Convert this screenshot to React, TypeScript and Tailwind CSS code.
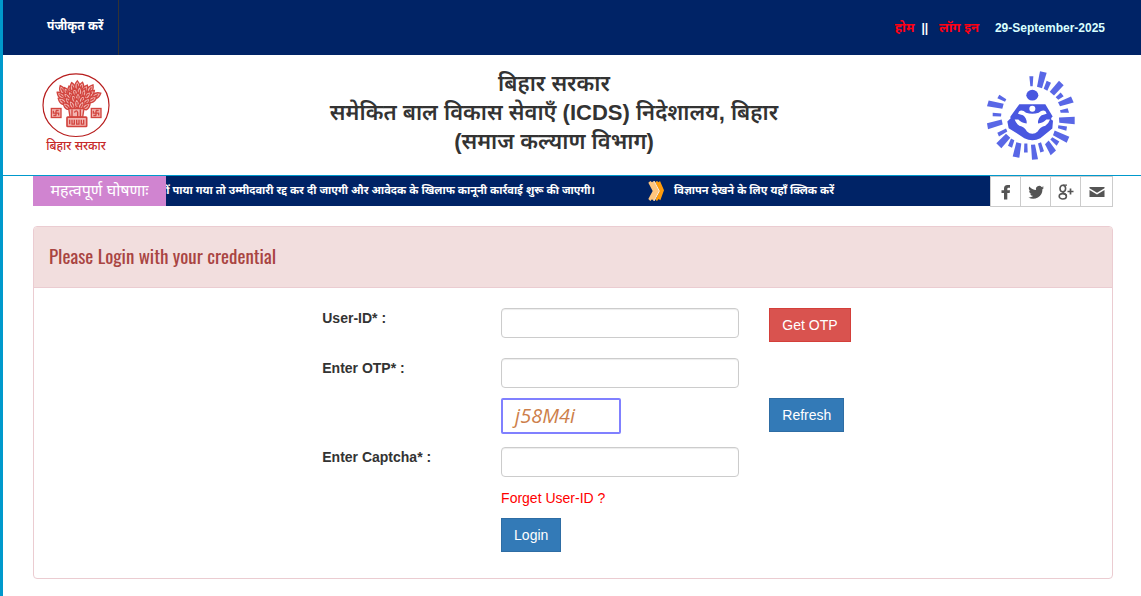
import { ReactNode } from 'react';

interface FieldProps {
  id: string;
  label: string;
  type?: string;
  action?: ReactNode;
}

const RAYS = [
  '178,48 190,48 188,78 181,78',
  '210,33 230,38 216,84 201,80',
  '230,62 243,68 232,92 221,86',
  '267,62 281,75 252,106 239,95',
  '272,97 281,108 265,119 257,111',
  '303,109 311,127 270,138 264,126',
  '293,144 297,158 272,158 270,150',
  '314,170 314,192 268,188 267,172',
  '291,199 289,212 264,204 265,195',
  '298,230 290,248 249,225 254,211',
  '268,244 260,257 241,238 247,231',
  '258,271 242,285 225,252 236,241',
  '222,273 211,277 204,250 213,246',
  '204,297 186,299 183,254 195,253',
  '173,277 162,277 163,250 172,250',
  '148,293 128,289 139,246 154,250',
  '126,263 114,257 123,235 133,240',
  '94,264 79,249 108,221 121,233',
  '87,229 82,218 108,205 112,214',
  '54,207 51,189 95,178 98,193',
  '68,168 68,158 94,160 93,169',
  '51,138 56,121 101,131 97,146',
  '82,114 88,104 109,117 105,125',
];

// [x, y, angle] of each leaf in the tree crown
const LEAVES = [
  [58, 62, -50], [62, 46, -25], [75, 52, -25], [86, 48, -15], [93, 38, -12],
  [107, 33, 0], [119, 37, 14], [130, 44, 28], [146, 43, 32], [147, 57, 48],
  [164, 62, 62], [152, 74, 60], [137, 62, 40], [125, 56, 18], [113, 50, 4],
  [100, 54, -12], [88, 62, -28], [76, 66, -38], [62, 79, -55], [80, 79, -40],
  [97, 72, -18], [109, 68, 0], [121, 75, 20], [134, 81, 45], [76, 94, -50],
  [91, 90, -28], [106, 87, -6], [119, 92, 25], [134, 95, 50],
];

function BiharEmblem() {
  return (
    <svg viewBox="0 0 204 194" className="w-[68px] h-[65px]" fill="none" stroke="#b71c1c" aria-hidden="true">
      <ellipse cx="102" cy="96" rx="99" ry="94" strokeWidth="3.5" />
      <g stroke="#d2453f" strokeWidth="4" fill="#f2b5b1">
        {LEAVES.map(([x, y, angle]) => (
          <path
            key={`${x}-${y}`}
            d="M0 -15 Q10 -4 7 7 Q0 15 -7 7 Q-10 -4 0 -15Z M0 -6 V7"
            transform={`translate(${x - 1} ${y + 5}) rotate(${angle})`}
          />
        ))}
        <path d="M80 106 H126 L122 132 H84 Z M90 109 V130 M97 118 Q104 108 107 118 V130 M115 109 V130" />
        <rect x="75" y="132" width="59" height="28" rx="2" strokeWidth="5" />
        <path d="M83 140 V153 M90 140 V153 H97 V140 M104 140 V153 H111 V140 M118 140 V153 H125 V140" />
        <rect x="28" y="106" width="29" height="27" />
        <path d="M34 113 V120 H50 V127 M42 112 V128 M42 112 H50 M34 127 H42" />
        <rect x="148" y="106" width="29" height="27" />
        <path d="M154 113 V120 H170 V127 M162 112 V128 M162 112 H170 M154 127 H162" />
      </g>
    </svg>
  );
}

function IcdsLogo() {
  return (
    <svg viewBox="48 30 270 272" className="w-[90px] h-[91px]" aria-label="ICDS">
      <g fill="#5967e6">
        {RAYS.map((points) => (
          <polygon key={points} points={points} />
        ))}
      </g>
      <g fill="#4957e0">
        <ellipse cx="187" cy="105" rx="18" ry="16" />
        <path d="M148 132 H226 L248 169 Q243 172 243 177 L249 182 L247 205 L211 234 Q187 246 163 234 L116 204 L112 184 L122 174 Q120 171 122 168 Z" />
      </g>
      <g fill="#fff">
        <circle cx="187" cy="146" r="9" />
        <path d="M147 154 Q156 147 168 158 Q187 164 206 158 Q218 147 227 154 L230 161 Q223 164 215 165 Q203 174 204 190 Q220 189 229 178 L240 178 Q236 190 226 197 Q210 201 203 214 Q196 221 187 221 Q178 221 171 214 Q164 201 148 197 Q138 190 134 178 L145 178 Q154 189 170 190 Q171 174 159 165 Q151 164 144 161 Z" />
      </g>
    </svg>
  );
}

function ChevronMark() {
  return (
    <svg viewBox="0 0 48 60" className="w-4 h-5 shrink-0" aria-hidden="true">
      <path d="M21 4 L27 0 L32 4 L36 0 L48 28 L37 58 L32 54 L27 60 L22 56 L34 30 Z" fill="#ff9c0c" />
      <path d="M1 5 L7 0 L12 4 L18 0 L34 30 L18 60 L12 55 L7 60 L1 54 L14 30 Z" fill="#ffc57d" />
      <path d="M18 0 L34 30 L18 60" fill="none" stroke="#fff0dc" strokeWidth="3" />
    </svg>
  );
}

const SOCIAL = [
  {
    name: 'Facebook',
    icon: <path fill="#555" d="M6 15.5 V9 H3.5 V6.3 H6 V4.5 Q6 1 9.4 1 H12 V3.8 H10.3 Q9.3 3.8 9.3 5 V6.3 H12 L11.7 9 H9.3 V15.5 Z" />,
  },
  {
    name: 'Twitter',
    icon: (
      <path
        fill="#555"
        d="M16 3.5 a6 6 0 0 1-1.7.5 3 3 0 0 0 1.3-1.8 6 6 0 0 1-2 .8 3.2 3.2 0 0 0-5.5 3 9 9 0 0 1-6.7-3.5 3.3 3.3 0 0 0 1 4.4 3 3 0 0 1-1.4-.4 3.3 3.3 0 0 0 2.6 3.2 3 3 0 0 1-1.5.1 3.3 3.3 0 0 0 3 2.3 6.5 6.5 0 0 1-4.7 1.3 9.2 9.2 0 0 0 14-8.2 6 6 0 0 0 1.6-1.7z"
      />
    ),
  },
  {
    name: 'Google Plus',
    icon: (
      <g fill="none" stroke="#555">
        <ellipse cx="4.8" cy="4.5" rx="2.8" ry="3.3" strokeWidth="1.6" />
        <path d="M5 1.1 H9 M6.5 7.2 Q4 8.3 5.5 9.2" strokeWidth="1.4" />
        <ellipse cx="4.8" cy="12.3" rx="3.6" ry="2.7" strokeWidth="1.6" />
        <path d="M5.2 9 Q7.6 10 8.4 11.6" strokeWidth="1.8" />
        <path d="M12.5 4.5 V10.5 M9.5 7.5 H15.5" strokeWidth="1.7" />
      </g>
    ),
  },
  {
    name: 'Email',
    icon: <path fill="#555" d="M.5 3 H15.5 V4.2 L8 8.8 L.5 4.2 Z M.5 6 L8 10.4 L15.5 6 V13 H.5 Z" />,
  },
];

function Field({ id, label, type = 'text', action }: FieldProps) {
  return (
    <div className="grid grid-cols-12">
      <label htmlFor={id} className="col-start-4 col-span-2 px-[15px] font-bold leading-5 text-[#333]">
        {label}
      </label>
      <div className="col-span-3 px-[15px]">
        <input
          id={id}
          type={type}
          className="block w-full h-[30px] px-2 bg-white border border-[#ccc] rounded-[4px] shadow-[inset_0_1px_1px_rgba(0,0,0,0.075)]"
        />
      </div>
      {action && <div className="col-span-3 px-[15px]">{action}</div>}
    </div>
  );
}

export default function App() {
  return (
    <div
      lang="hi"
      className="min-h-screen border-l-[3px] border-[#0099cc] bg-white text-sm text-[#333] font-['Liberation_Sans','Noto_Sans',sans-serif]"
    >
      <nav className="flex h-[55px] justify-between bg-[#002366] text-xs font-bold text-white">
        <a
          href="#register"
          className="flex w-[116px] items-center border-r border-[#333] pl-[44px] pb-1 whitespace-nowrap"
        >
          पंजीकृत करें
        </a>
        <div className="flex items-center pr-9">
          <a href="#home" className="text-[13px] text-[#ff0012]">होम</a>
          <span className="px-[7px]">||</span>
          <a href="#login" className="ml-1 mr-4 text-[13px] text-[#ff0012]">लॉग इन</a>
          <span className="text-[#d9ffff]">29-September-2025</span>
        </div>
      </nav>

      <header className="flex h-[121px] items-start justify-between border-b border-[#0099cc] pl-[39px] pr-[65px]">
        <div className="flex flex-col items-center pt-[18px] text-xs font-medium text-[#c62828]">
          <BiharEmblem />
          <span className="leading-4">बिहार सरकार</span>
        </div>
        <h1 className="pt-[14px] pl-3 text-center text-[22px] leading-[29px] font-semibold">
          बिहार सरकार
          <br />
          समेकित बाल विकास सेवाएँ (ICDS) निदेशालय, बिहार
          <br />
          (समाज कल्याण विभाग)
        </h1>
        <div className="pt-[15px]">
          <IcdsLogo />
        </div>
      </header>

      <main className="pl-[30px] pr-7">
        <div className="flex h-[30px]">
          <h2 className="flex w-[133px] shrink-0 items-center justify-center bg-[#d084d0] text-base text-white whitespace-nowrap">
            महत्वपूर्ण घोषणाः
          </h2>
          <div className="flex min-w-0 flex-1 items-center justify-end overflow-hidden bg-[#002366] pr-[156px] text-[11px] font-bold whitespace-nowrap text-white">
            <span className="mr-[53px] shrink-0">
              नहीं पाया गया तो उम्मीदवारी रद्द कर दी जाएगी और आवेदक के खिलाफ कानूनी कार्रवाई शुरू की जाएगी।
            </span>
            <ChevronMark />
            <a href="#advertisement" className="ml-[10px] shrink-0">
              विज्ञापन देखने के लिए यहाँ क्लिक करें
            </a>
          </div>
          <div className="flex h-[31px] w-[123px] shrink-0 border border-[#ccc]">
            {SOCIAL.map(({ name, icon }) => (
              <a
                key={name}
                href="#social"
                aria-label={name}
                className="flex w-[30px] items-center justify-center border-r border-[#ccc] last:w-[31px] last:border-r-0"
              >
                <svg viewBox="0 0 16 16" className="h-4 w-4">
                  {icon}
                </svg>
              </a>
            ))}
          </div>
        </div>

        <section className="mt-5 rounded-[4px] border border-[#ebccd1] bg-white">
          <div className="h-[61px] rounded-t-[3px] border-b border-[#ebccd1] bg-[#f2dede] px-[15px] pt-3">
            <h2 className="text-[19px] leading-8 font-normal text-[#a94442] font-['Oswald','Liberation_Sans_Narrow','Roboto_Condensed',sans-serif]">
              Please Login with your credential
            </h2>
          </div>
          <form className="pt-5 pb-[26px] pl-[5px]" onSubmit={(e) => e.preventDefault()}>
            <Field
              id="user-id"
              label="User-ID* :"
              action={
                <button type="button" className="h-[34px] border border-[#d43f3a] bg-[#d9534f] px-3 text-white">
                  Get OTP
                </button>
              }
            />
            <div className="mt-4">
              <Field id="otp" label="Enter OTP* :" />
            </div>
            <div className="mt-[10px] grid grid-cols-12">
              <div className="col-start-6 col-span-3 px-[15px]">
                <div className="flex h-9 w-[120px] items-center rounded-[2px] border-2 border-[#8080ff] pl-3 text-xl text-[#cd7f4b] italic font-['Open_Sans',sans-serif]">
                  j58M4i
                </div>
              </div>
              <div className="col-span-3 px-[15px]">
                <button type="button" className="h-[34px] border border-[#2e6da4] bg-[#337ab7] px-3 text-white">
                  Refresh
                </button>
              </div>
            </div>
            <div className="mt-[13px]">
              <Field id="captcha" label="Enter Captcha* :" />
            </div>
            <div className="mt-[11px] grid grid-cols-12">
              <div className="col-start-6 col-span-3 px-[15px]">
                <a href="#forget" className="block leading-5 text-[#f00]">
                  Forget User-ID ?
                </a>
                <button type="submit" className="mt-[10px] h-[34px] border border-[#2e6da4] bg-[#337ab7] px-3 text-white">
                  Login
                </button>
              </div>
            </div>
          </form>
        </section>
      </main>
    </div>
  );
}
